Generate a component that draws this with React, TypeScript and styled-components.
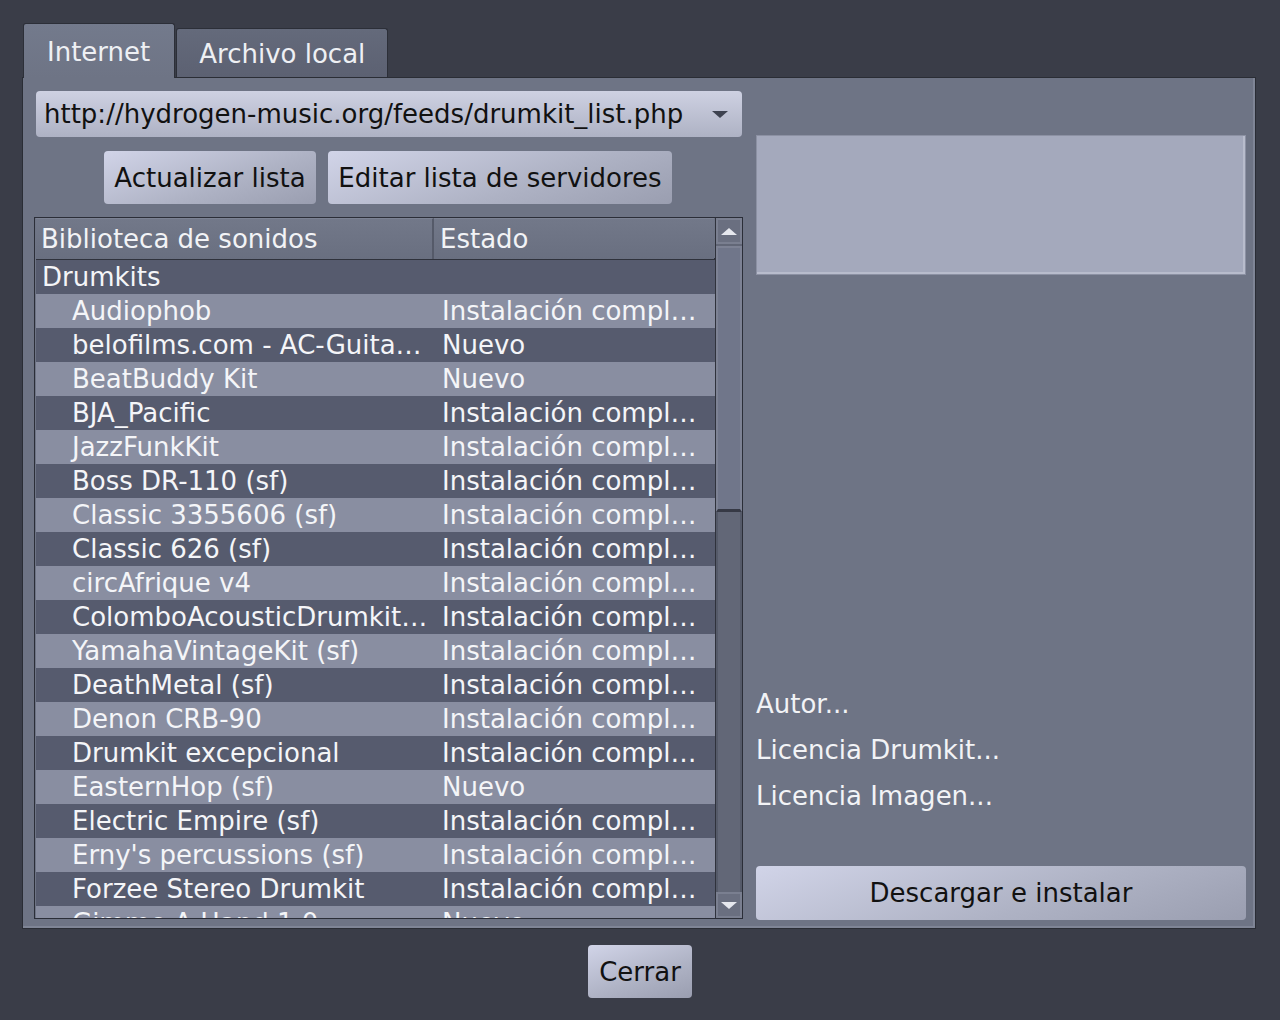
import React from "react";
import styled, { createGlobalStyle } from "styled-components";

const Global = createGlobalStyle`
  html, body {
    margin: 0;
    padding: 0;
    background: #3a3d48;
  }
  body {
    font-family: 'DejaVu Sans', 'Liberation Sans', sans-serif;
    font-size: 26px;
  }
`;

const Dialog = styled.div`
  width: 1280px;
  height: 1020px;
  box-sizing: border-box;
  padding: 23px 24px 0 22px;
  display: flex;
  flex-direction: column;
`;

const TabBar = styled.div`
  display: flex;
  align-items: flex-end;
  height: 54px;
  padding-left: 1px;
  position: relative;
  z-index: 1;
`;

const Tab = styled.div<{ $active?: boolean }>`
  box-sizing: border-box;
  height: ${(p) => (p.$active ? "55px" : "49px")};
  margin-bottom: ${(p) => (p.$active ? "-1px" : "0")};
  margin-right: 1px;
  padding: ${(p) => (p.$active ? "12px 24px 0 23px" : "9px 22px 0 22px")};
  color: #eef0f4;
  line-height: 32px;
  border: 1px solid #2c2f38;
  border-bottom: none;
  border-radius: 3px 3px 0 0;
  background: ${(p) =>
    p.$active
      ? "linear-gradient(#737a8c, #6e7485)"
      : "linear-gradient(#646a7b, #5c6172)"};
`;

const Pane = styled.div`
  box-sizing: border-box;
  width: 1234px;
  height: 852px;
  border: 1px solid #2a2d35;
  box-shadow: inset -2px -2px 0 #7f8596;
  background: #6e7485;
  padding: 13px 9px 0 13px;
  display: grid;
  grid-template-columns: 707px 490px;
  column-gap: 13px;
`;

const LeftCol = styled.div`
  display: flex;
  flex-direction: column;
`;

const Combo = styled.div`
  box-sizing: border-box;
  height: 46px;
  width: 706px;
  border-radius: 4px;
  background: linear-gradient(#ced1e2, #aeb2c4);
  color: #111;
  padding-left: 8px;
  display: flex;
  align-items: center;
  justify-content: space-between;
  padding-right: 14px;
`;

const Caret = styled.span`
  width: 0;
  height: 0;
  border-left: 8px solid transparent;
  border-right: 8px solid transparent;
  border-top: 7px solid #3e4250;
`;

const ButtonRow = styled.div`
  display: flex;
  justify-content: center;
  gap: 12px;
  margin: 14px 0 13px;
  padding-right: 3px;
`;

const Button = styled.button<{ $width?: string; $height?: string }>`
  font-family: inherit;
  font-size: 26px;
  color: #111;
  border: none;
  border-radius: 4px;
  white-space: nowrap;
  width: ${(p) => p.$width || "auto"};
  height: ${(p) => p.$height || "53px"};
  padding: 0;
  background: linear-gradient(160deg, #d1d4e8 0%, #aeb2c4 60%, #9a9eb0 100%);
`;

const Tree = styled.div`
  box-sizing: border-box;
  width: 709px;
  height: 702px;
  margin-left: -2px;
  border: 1px solid #2b2e38;
  display: grid;
  grid-template-columns: 1fr 27px;
  overflow: hidden;
`;

const TreeBody = styled.div`
  display: flex;
  flex-direction: column;
  overflow: hidden;
  padding-left: 1px;
`;

const Header = styled.div`
  display: grid;
  grid-template-columns: 398px 280px;
  height: 40px;
  border-bottom: 2px solid #2f323c;
  flex-shrink: 0;
`;

const HeaderCell = styled.div<{ $last?: boolean }>`
  box-sizing: border-box;
  color: #f2f3f6;
  line-height: 40px;
  padding-left: ${(p) => (p.$last ? "6px" : "5px")};
  background: linear-gradient(#727889, #696f80);
  border-right: ${(p) => (p.$last ? "none" : "2px solid #555a69")};
  border-top: 1px solid #7c8293;
`;

const Row = styled.div<{ $light?: boolean }>`
  display: grid;
  grid-template-columns: 398px 280px;
  height: 34px;
  flex-shrink: 0;
  line-height: 35px;
  color: #f4f5f8;
  background: ${(p) => (p.$light ? "#898ea1" : "#565b6e")};
`;

const Cell = styled.div<{ $indent?: number; $pr?: number }>`
  box-sizing: border-box;
  padding-left: ${(p) => p.$indent ?? 8}px;
  padding-right: ${(p) => p.$pr ?? 7}px;
  white-space: nowrap;
  overflow: hidden;
  text-overflow: ellipsis;
`;

const ScrollBar = styled.div`
  display: flex;
  flex-direction: column;
  background: #626777;
  border-left: 1px solid #2f323c;
`;

const ScrollBtn = styled.div`
  height: 26px;
  box-sizing: border-box;
  border: 2px solid #7a7f90;
  background: #6a6f80;
  display: flex;
  align-items: center;
  justify-content: center;
`;

const Arrow = styled.span<{ $up?: boolean }>`
  width: 0;
  height: 0;
  border-left: 8px solid transparent;
  border-right: 8px solid transparent;
  ${(p) =>
    p.$up ? "border-bottom: 7px solid #e6e8ee;" : "border-top: 7px solid #e6e8ee;"}
`;

const Handle = styled.div`
  height: 266px;
  box-sizing: border-box;
  margin-top: 2px;
  border: 2px solid #7d8294;
  border-bottom: 3px solid #363945;
  background: #70768a;
`;

const Track = styled.div`
  flex: 1;
  border-left: 2px solid #555a69;
  border-right: 2px solid #555a69;
`;

const RightCol = styled.div`
  display: flex;
  flex-direction: column;
  padding-top: 44px;
`;

const ImageBox = styled.div`
  box-sizing: border-box;
  height: 140px;
  background: #a4a9bc;
  border: 1px solid #8c91a3;
  box-shadow: inset -2px -2px 0 #b8bccc;
`;

const InfoList = styled.div`
  margin-top: 412px;
  display: flex;
  flex-direction: column;
  gap: 12px;
`;

const InfoLabel = styled.div`
  color: #f2f3f6;
  line-height: 34px;
`;

const Footer = styled.div`
  display: flex;
  justify-content: center;
  padding-top: 16px;
  padding-left: 2px;
`;

const kits: [string, string][] = [
  ["Audiophob", "Instalación completada"],
  ["belofilms.com - AC-Guitar-Strums (flac)", "Nuevo"],
  ["BeatBuddy Kit", "Nuevo"],
  ["BJA_Pacific", "Instalación completada"],
  ["JazzFunkKit", "Instalación completada"],
  ["Boss DR-110 (sf)", "Instalación completada"],
  ["Classic 3355606 (sf)", "Instalación completada"],
  ["Classic 626 (sf)", "Instalación completada"],
  ["circAfrique v4", "Instalación completada"],
  ["ColomboAcousticDrumkit_v1", "Instalación completada"],
  ["YamahaVintageKit (sf)", "Instalación completada"],
  ["DeathMetal (sf)", "Instalación completada"],
  ["Denon CRB-90", "Instalación completada"],
  ["Drumkit excepcional", "Instalación completada"],
  ["EasternHop (sf)", "Nuevo"],
  ["Electric Empire (sf)", "Instalación completada"],
  ["Erny's percussions (sf)", "Instalación completada"],
  ["Forzee Stereo Drumkit", "Instalación completada"],
  ["Gimme A Hand 1.0", "Nuevo"],
];

export default function App() {
  return (
    <>
      <Global />
      <Dialog>
        <TabBar>
          <Tab $active>Internet</Tab>
          <Tab>Archivo local</Tab>
        </TabBar>
        <Pane>
          <LeftCol>
            <Combo>
              <span>http://hydrogen-music.org/feeds/drumkit_list.php</span>
              <Caret />
            </Combo>
            <ButtonRow>
              <Button $width="212px">Actualizar lista</Button>
              <Button $width="344px">Editar lista de servidores</Button>
            </ButtonRow>
            <Tree>
              <TreeBody>
                <Header>
                  <HeaderCell>Biblioteca de sonidos</HeaderCell>
                  <HeaderCell $last>Estado</HeaderCell>
                </Header>
                <Row>
                  <Cell $indent={6}>Drumkits</Cell>
                  <Cell />
                </Row>
                {kits.map(([name, status], i) => (
                  <Row key={name} $light={i % 2 === 0}>
                    <Cell $indent={36} $pr={4}>
                      {name}
                    </Cell>
                    <Cell>{status}</Cell>
                  </Row>
                ))}
              </TreeBody>
              <ScrollBar>
                <ScrollBtn>
                  <Arrow $up />
                </ScrollBtn>
                <Handle />
                <Track />
                <ScrollBtn>
                  <Arrow />
                </ScrollBtn>
              </ScrollBar>
            </Tree>
          </LeftCol>
          <RightCol>
            <ImageBox />
            <InfoList>
              <InfoLabel>Autor...</InfoLabel>
              <InfoLabel>Licencia Drumkit...</InfoLabel>
              <InfoLabel>Licencia Imagen...</InfoLabel>
            </InfoList>
            <Button $height="54px" style={{ marginTop: "53px" }}>
              Descargar e instalar
            </Button>
          </RightCol>
        </Pane>
        <Footer>
          <Button $width="104px">Cerrar</Button>
        </Footer>
      </Dialog>
    </>
  );
}
